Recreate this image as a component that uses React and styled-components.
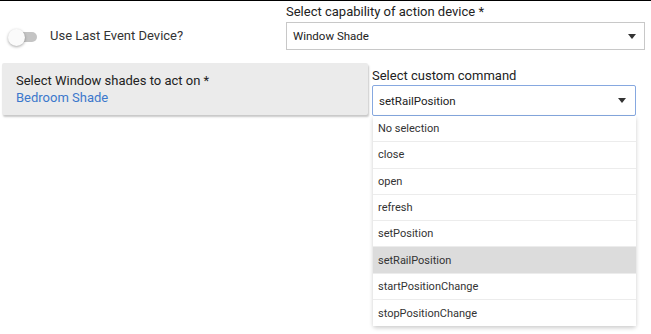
import React from "react";
import styled, { createGlobalStyle } from "styled-components";

const Global = createGlobalStyle`
  html, body { margin: 0; padding: 0; background: #fff; }
  body { font-family: Roboto, "Liberation Sans", Arial, sans-serif; color: #222; }
`;

const Page = styled.div`
  width: 651px;
  height: 334px;
  border-top: 1px solid #000;
  box-sizing: border-box;
  display: flex;
  flex-direction: column;
  overflow: hidden;
`;

const Row = styled.div`
  display: grid;
  grid-template-columns: ${p => p.$cols};
  height: ${p => p.$h || "auto"};
  align-items: start;
`;

const ToggleRow = styled.label`
  display: flex;
  align-items: center;
  gap: 13px;
  padding: 26px 0 0 8px;
  font-size: 13px;
  line-height: 17px;
  color: #333;
`;

const Switch = styled.span`
  position: relative;
  width: 29px;
  height: 17px;
  flex: none;
  display: inline-block;
  top: 2px;
  &::before {
    content: "";
    position: absolute;
    left: 5px;
    top: 3px;
    width: 24px;
    height: 10px;
    border-radius: 5px;
    background: #c4c4c4;
  }
  &::after {
    content: "";
    position: absolute;
    left: 0;
    top: 0;
    width: 17px;
    height: 17px;
    border-radius: 50%;
    background: #fafafa;
    box-shadow: 0 1px 3px rgba(0,0,0,0.35);
  }
`;

const Field = styled.div`
  display: flex;
  flex-direction: column;
  padding-top: ${p => p.$top}px;
  padding-left: ${p => p.$left || 0}px;
`;

const Label = styled.div`
  font-size: 13px;
  line-height: 16px;
  color: #222;
  margin-bottom: ${p => p.$gap}px;
`;

const SelectBox = styled.div`
  box-sizing: border-box;
  height: ${p => p.$h}px;
  border: 1px solid ${p => (p.$focus ? "#86a8e0" : "#c8c8c8")};
  border-radius: ${p => (p.$focus ? "2px" : "0")};
  display: flex;
  align-items: center;
  justify-content: space-between;
  padding: 0 ${p => p.$right}px 0 6px;
  font-size: 11.5px;
  color: #222;
  background: #fff;
`;

const Caret = styled.span`
  width: 0;
  height: 0;
  border-left: 4.5px solid transparent;
  border-right: 4.5px solid transparent;
  border-top: 5px solid #333;
`;

const Panel = styled.div`
  margin-left: 2px;
  height: 52px;
  box-sizing: border-box;
  background: #ebebeb;
  box-shadow: 1px 2px 2px rgba(0,0,0,0.22);
  border-radius: 2px;
  padding: 9px 14px;
  line-height: 17px;
`;

const PanelTitle = styled.div`
  color: #222;
  font-size: 13px;
`;

const PanelValue = styled.div`
  color: #3b78cc;
  font-size: 13px;
`;

const Menu = styled.ul`
  list-style: none;
  margin: 0 0 0 1px;
  padding: 0;
  background: #fff;
  box-shadow: 0 2px 4px rgba(0,0,0,0.2);
  border-radius: 0 0 3px 3px;
`;

const Item = styled.li`
  height: 26.3px;
  box-sizing: border-box;
  display: flex;
  align-items: center;
  padding-left: 5px;
  font-size: 11px;
  color: #333;
  background: ${p => (p.$active ? "#dcdcdc" : "#fff")};
  border-bottom: 1px solid #ececec;
  &:last-child { border-bottom: none; }
`;

const items = [
  "No selection",
  "close",
  "open",
  "refresh",
  "setPosition",
  "setRailPosition",
  "startPositionChange",
  "stopPositionChange",
];

export default function App() {
  return (
    <>
      <Global />
      <Page>
        <Row $cols="286px 359px" $h="62px">
          <ToggleRow>
            <Switch />
            Use Last Event Device?
          </ToggleRow>
          <Field $top={3}>
            <Label $gap={2}>Select capability of action device *</Label>
            <SelectBox $h={28} $right={8}>
              Window Shade
              <Caret />
            </SelectBox>
          </Field>
        </Row>
        <Row $cols="368px 268px">
          <Panel>
            <PanelTitle>Select Window shades to act on *</PanelTitle>
            <PanelValue>Bedroom Shade</PanelValue>
          </Panel>
          <Field $top={5} $left={4}>
            <Label $gap={1}>Select custom command</Label>
            <SelectBox $focus $h={31} $right={9}>
              setRailPosition
              <Caret />
            </SelectBox>
            <Menu>
              {items.map(t => (
                <Item key={t} $active={t === "setRailPosition"}>{t}</Item>
              ))}
            </Menu>
          </Field>
        </Row>
      </Page>
    </>
  );
}
